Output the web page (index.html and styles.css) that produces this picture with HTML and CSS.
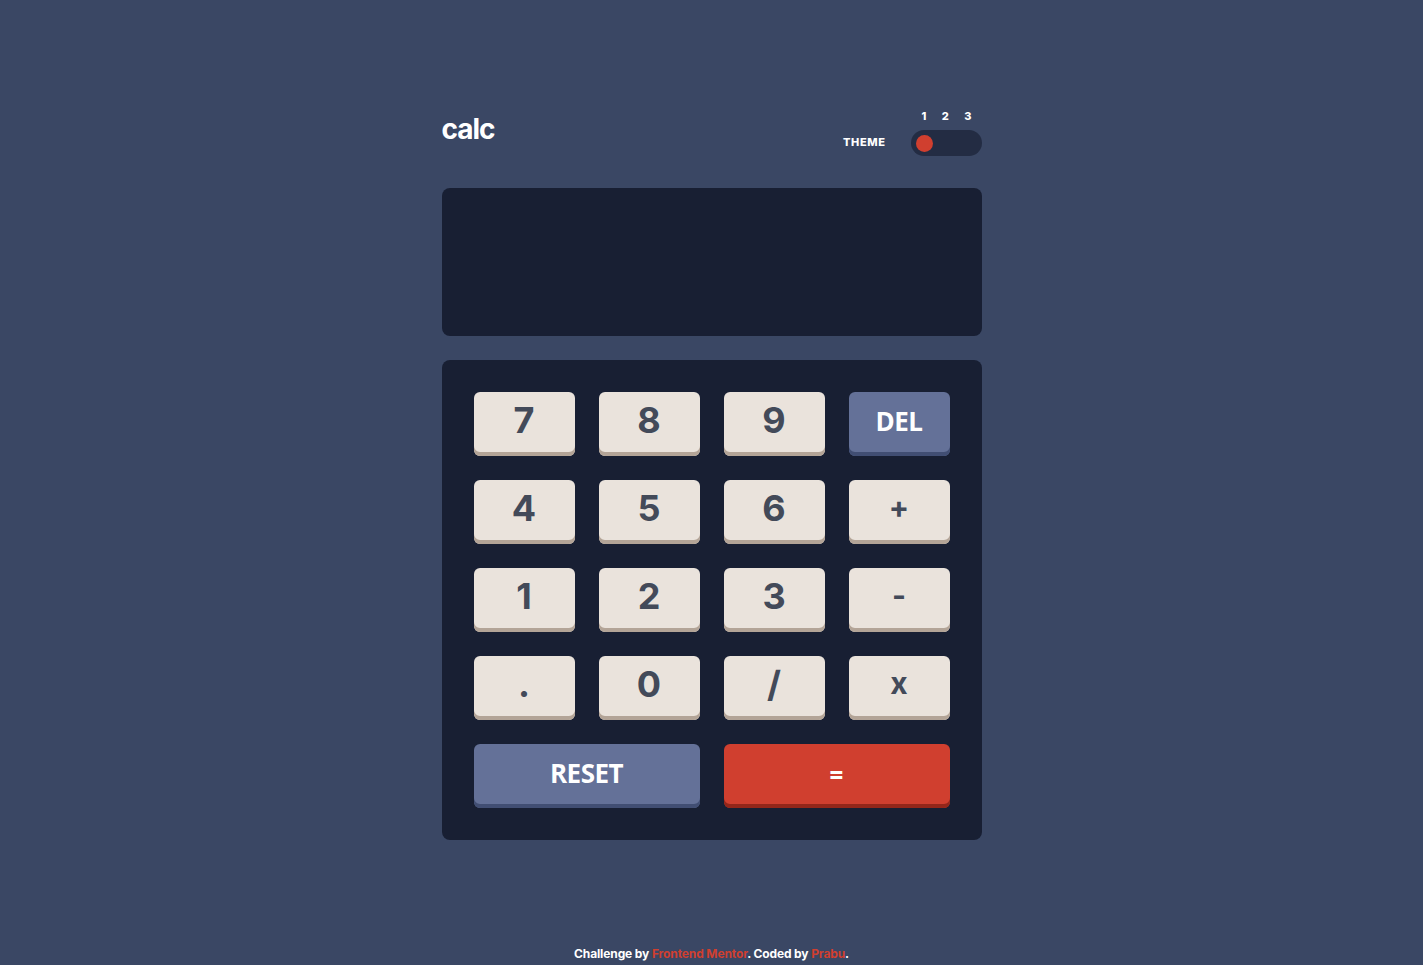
FILE: index.html
```html
<!DOCTYPE html>
<html lang="en">
<head>
<meta charset="utf-8">
<title>calc</title>
<link rel="stylesheet" href="styles.css">
</head>
<body>
<main class="calc">
  <header class="header">
    <h1 class="logo">calc</h1>
    <div class="theme">
      <span class="theme-label">THEME</span>
      <div class="theme-switch">
        <div class="theme-nums"><span>1</span><span>2</span><span>3</span></div>
        <div class="track"><span class="knob"></span></div>
      </div>
    </div>
  </header>
  <section class="screen"></section>
  <section class="keypad">
    <button class="key">7</button>
    <button class="key">8</button>
    <button class="key">9</button>
    <button class="key key-blue">DEL</button>
    <button class="key">4</button>
    <button class="key">5</button>
    <button class="key">6</button>
    <button class="key key-op">+</button>
    <button class="key">1</button>
    <button class="key">2</button>
    <button class="key">3</button>
    <button class="key key-op">-</button>
    <button class="key">.</button>
    <button class="key">0</button>
    <button class="key">/</button>
    <button class="key key-op">x</button>
    <button class="key key-blue key-wide">RESET</button>
    <button class="key key-red key-wide">=</button>
  </section>
</main>
<footer class="footer">Challenge by <a href="#">Frontend Mentor</a>. Coded by <a href="#">Prabu</a>.</footer>
</body>
</html>
```
FILE: styles.css
```css
* { box-sizing: border-box; }
html, body { margin: 0; padding: 0; }
body {
  background: #3a4764;
  color: #fff;
  font-family: Inter, "Noto Sans", sans-serif;
  min-height: 100vh;
  display: flex;
  flex-direction: column;
  align-items: center;
}
.calc {
  width: 540px;
  margin-top: 110px;
}
.header {
  display: flex;
  justify-content: space-between;
  align-items: flex-end;
  height: 46px;
}
.logo {
  margin: 0 0 13px 0;
  font-size: 28px;
  font-weight: 700;
  line-height: 28px;
  letter-spacing: -1px;
}
.theme {
  display: flex;
  align-items: flex-end;
  gap: 25px;
}
.theme-label {
  font-size: 11px;
  font-weight: 800;
  letter-spacing: 0.6px;
  line-height: 12px;
  margin-bottom: 8px;
}
.theme-switch {
  display: flex;
  flex-direction: column;
  gap: 8px;
}
.theme-nums {
  display: flex;
  justify-content: space-between;
  padding: 0 10px 0 11px;
  font-size: 11px;
  font-weight: 800;
  line-height: 12px;
}
.track {
  width: 71px;
  height: 26px;
  border-radius: 13px;
  background: #232c43;
  padding: 5px;
  display: flex;
  align-items: center;
}
.knob {
  width: 17px;
  height: 17px;
  border-radius: 50%;
  background: #d03f2f;
}
.screen {
  margin-top: 32px;
  height: 148px;
  border-radius: 8px;
  background: #181f33;
}
.keypad {
  margin-top: 24px;
  background: #181f33;
  border-radius: 8px;
  padding: 32px 32px 32px;
  display: grid;
  grid-template-columns: repeat(4, 101px);
  grid-auto-rows: 64px;
  column-gap: 24px;
  row-gap: 24px;
}
.key {
  border: none;
  border-radius: 6px;
  background: #eae3dc;
  box-shadow: inset 0 -4px 0 #b3a497;
  color: #434a59;
  font-family: Inter, "Noto Sans", sans-serif;
  font-size: 36px;
  font-weight: 700;
  padding: 0 0 8px;
  display: flex;
  align-items: center;
  justify-content: center;
  cursor: pointer;
}
.key-op { font-size: 30px; padding-bottom: 10px; }
.key-blue {
  background: #647198;
  box-shadow: inset 0 -4px 0 #414e73;
  color: #fff;
  font-family: "Open Sans", "Noto Sans", sans-serif;
  font-size: 26px;
  letter-spacing: -0.5px;
  padding-bottom: 6px;
}
.key-red {
  background: #d03f2f;
  box-shadow: inset 0 -4px 0 #93261a;
  color: #fff;
  font-size: 24px;
  padding-bottom: 6px;
}
.key-wide { grid-column: span 2; }
.footer {
  margin-top: auto;
  padding-bottom: 3px;
  font-size: 12px;
  font-weight: 700;
  line-height: 16px;
  letter-spacing: -0.12px;
}
.footer a {
  color: #d03f2f;
  text-decoration: none;
}
```
